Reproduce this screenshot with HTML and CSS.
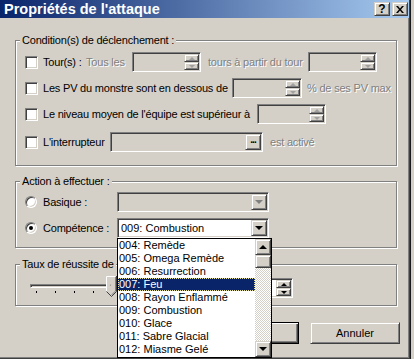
FILE: index.html
```html
<!DOCTYPE html>
<html lang="fr">
<head>
<meta charset="utf-8">
<title>Propriétés de l'attaque</title>
<link rel="stylesheet" href="styles.css">
</head>
<body>
<div class="window">
  <div class="titlebar">
    <span class="title">Propriétés de l'attaque</span>
    <span class="tbtn raised help">?</span>
    <span class="tbtn raised close"><svg width="8" height="7" viewBox="0 0 8 7"><path d="M0 0h2l2 2.4L6 0h2L5 3.5 8 7H6L4 4.6 2 7H0l3-3.5z" fill="#000"/></svg></span>
  </div>

  <div class="content">
    <div class="group g1">
      <div class="group-title">Condition(s) de déclenchement :</div>
      <div class="rows">
        <div class="row">
          <span class="check sunken"></span>
          <span class="lbl w-tour">Tour(s) :</span>
          <span class="lbl dim w-tous">Tous les</span>
          <span class="field sunken disabled w69">
            <span class="spin"><span class="sb raised"><i class="aup"></i></span><span class="sb raised"><i class="adown"></i></span></span>
          </span>
          <span class="lbl dim after w-partir">tours à partir du tour</span>
          <span class="field sunken disabled w69">
            <span class="spin"><span class="sb raised"><i class="aup"></i></span><span class="sb raised"><i class="adown"></i></span></span>
          </span>
        </div>
        <div class="row">
          <span class="check sunken"></span>
          <span class="lbl w-pv">Les PV du monstre sont en dessous de</span>
          <span class="field sunken disabled w70">
            <span class="spin"><span class="sb raised"><i class="aup"></i></span><span class="sb raised"><i class="adown"></i></span></span>
          </span>
          <span class="lbl dim after-pv">% de ses PV max</span>
        </div>
        <div class="row">
          <span class="check sunken"></span>
          <span class="lbl w-niv">Le niveau moyen de l'équipe est supérieur à</span>
          <span class="field sunken disabled w69">
            <span class="spin"><span class="sb raised"><i class="aup"></i></span><span class="sb raised"><i class="adown"></i></span></span>
          </span>
        </div>
        <div class="row r4">
          <span class="check sunken"></span>
          <span class="lbl w-int">L'interrupteur</span>
          <span class="field sunken disabled w153">
            <span class="dots raised">...</span>
          </span>
          <span class="lbl dim after">est activé</span>
        </div>
      </div>
    </div>

    <div class="group g2">
      <div class="group-title">Action à effectuer :</div>
      <div class="rows r-action">
        <div class="row">
          <span class="radio"></span>
          <span class="lbl w-radio">Basique :</span>
          <span class="combo sunken disabled">
            <span class="ctext"></span>
            <span class="cbtn raised"><i class="carrow dimarrow"></i></span>
          </span>
        </div>
        <div class="row">
          <span class="radio checked"></span>
          <span class="lbl w-radio">Compétence :</span>
          <span class="combo sunken">
            <span class="ctext">009: Combustion</span>
            <span class="cbtn raised"><i class="carrow"></i></span>
          </span>
        </div>
      </div>
    </div>

    <div class="group g3">
      <div class="group-title">Taux de réussite de</div>
      <div class="row slider-row">
        <div class="slider">
          <div class="track"></div>
          <div class="ticks"><i></i><i></i><i></i><i></i><i></i><i></i><i></i><i></i><i></i><i></i></div>
          <svg class="thumb" width="11" height="21" viewBox="0 0 11 21">
            <path d="M0.5 15.5V0.5H9.5" fill="#d4d0c8" stroke="#fff"/>
            <path d="M1.5 15V1.5H9" fill="none" stroke="#d4d0c8"/>
            <path d="M10.5 0V15.5L5.5 20.5L0.5 15.5" fill="#d4d0c8" stroke="#404040"/>
            <path d="M9.5 1V15L5.5 19" fill="none" stroke="#808080"/>
          </svg>
        </div>
        <span class="field sunken w63">
          <span class="spin"><span class="sb raised"><i class="aup blk"></i></span><span class="sb raised"><i class="adown blk"></i></span></span>
        </span>
      </div>
    </div>

    <div class="buttons">
      <span class="btn default">OK</span>
      <span class="btn raised">Annuler</span>
    </div>
  </div>

  <div class="droplist">
    <div class="items">
      <div class="item">004: Remède</div>
      <div class="item">005: Omega Remède</div>
      <div class="item">006: Resurrection</div>
      <div class="item sel">007: Feu</div>
      <div class="item">008: Rayon Enflammé</div>
      <div class="item">009: Combustion</div>
      <div class="item">010: Glace</div>
      <div class="item">011: Sabre Glacial</div>
      <div class="item">012: Miasme Gelé</div>
    </div>
    <div class="vscroll">
      <span class="sbtn raised"><i class="carrow up"></i></span>
      <span class="sthumb raised"></span>
      <span class="strack"></span>
      <span class="sbtn raised"><i class="carrow"></i></span>
    </div>
  </div>
</div>
<div class="edge"></div>
</body>
</html>
```

FILE: styles.css
```css
* { box-sizing: border-box; }
html, body { margin: 0; padding: 0; }
body {
  width: 414px;
  height: 359px;
  overflow: hidden;
  display: flex;
  background: #d4d0c8;
  font-family: "Liberation Sans", Arial, sans-serif;
  font-size: 11px;
  color: #000;
}
i { display: block; font-style: normal; }

.window {
  position: relative;
  width: 410px;
  height: 359px;
  flex: none;
  display: flex;
  flex-direction: column;
  background: #d4d0c8;
  border-right: 1px solid #404040;
  border-bottom: 1px solid #404040;
  box-shadow: inset -1px -1px 0 #808080;
}
.edge {
  flex: 1;
  background: #d4d0c8;
  border-left: 1px solid #1a1a1a;
}

/* bevels */
.sunken {
  border: 1px solid;
  border-color: #808080 #fff #fff #808080;
  box-shadow: inset 1px 1px 0 #404040, inset -1px -1px 0 #d4d0c8;
}
.raised {
  background: #d4d0c8;
  border: 1px solid;
  border-color: #d4d0c8 #404040 #404040 #d4d0c8;
  box-shadow: inset 1px 1px 0 #fff, inset -1px -1px 0 #808080;
}

/* title bar */
.titlebar {
  height: 18px;
  flex: none;
  display: flex;
  align-items: center;
  padding: 0 1px 0 4px;
  background: linear-gradient(to right, #0a246a, #a6caf0);
  color: #fff;
  font-weight: bold;
  font-size: 14.5px;
}
.titlebar .title { flex: 1; white-space: nowrap; }
.tbtn {
  width: 16px;
  height: 14px;
  display: flex;
  align-items: center;
  justify-content: center;
  color: #000;
  font-size: 12px;
  line-height: 12px;
}
.tbtn + .tbtn { margin-left: 2px; }

/* content */
.content {
  flex: 1;
  display: flex;
  flex-direction: column;
  padding-left: 15px;
}
.group {
  width: 382px;
  flex: none;
  border: 1px solid #808080;
  box-shadow: inset 1px 1px 0 #fff, 1px 1px 0 #fff;
  padding-left: 9px;
  letter-spacing: -0.2px;
}
.group-title {
  width: max-content;
  height: 14px;
  line-height: 14px;
  margin: -8px 0 0 -5px;
  padding: 0 2px;
  background: #d4d0c8;
  white-space: nowrap;
}
.g1 { margin-top: 22px; height: 126px; }
.g2 { margin-top: 15px; height: 67px; }
.g3 { margin-top: 16px; height: 42px; }

.rows { display: flex; flex-direction: column; gap: 6px; margin-top: 5px; }
.rows .r4 { margin-top: 2px; }
.r-action { margin-top: 4px; }
.row {
  height: 20px;
  display: flex;
  align-items: center;
  white-space: nowrap;
}
.lbl { flex: none; }
.dim { color: #808080; text-shadow: 1px 1px 0 #fff; }
.w-tour { width: 43px; }
.w-tous { width: 46px; }
.w-partir { width: 100px; }
.w-pv { width: 189px; }
.w-niv { width: 214px; }
.w-int { width: 67px; }
.w-radio { width: 74px; }
.after { margin-left: 7px; }
.after-pv { margin-left: 5px; }

.check {
  width: 13px;
  height: 13px;
  flex: none;
  background: #fff;
  margin-right: 5px;
}
.radio {
  position: relative;
  width: 12px;
  height: 12px;
  flex: none;
  margin-right: 6px;
  border-radius: 50%;
  background: #fff;
  border: 1px solid;
  border-color: #808080 #fff #fff #808080;
  box-shadow: inset 1px 1px 0 #404040, inset -1px -1px 0 #d4d0c8;
}
.radio.checked::after {
  content: "";
  position: absolute;
  left: 3px;
  top: 3px;
  width: 4px;
  height: 4px;
  border-radius: 50%;
  background: #000;
}

/* edit fields + spin */
.field {
  flex: none;
  height: 20px;
  padding: 1px;
  display: flex;
  justify-content: flex-end;
  align-items: stretch;
  background: #fff;
}
.field.disabled { background: #d4d0c8; }
.w69 { width: 69px; }
.w70 { width: 70px; }
.w63 { width: 63px; }
.w153 { width: 153px; }
.spin { width: 15px; display: flex; flex-direction: column; }
.sb {
  height: 8px;
  display: flex;
  align-items: center;
  justify-content: center;
}
.aup, .adown {
  width: 0;
  height: 0;
  border-left: 3px solid transparent;
  border-right: 3px solid transparent;
}
.aup { border-bottom: 3px solid #a0a0a0; }
.adown { border-top: 3px solid #a0a0a0; }
.aup.blk { border-bottom-color: #000; }
.adown.blk { border-top-color: #000; }
.dots {
  width: 16px;
  display: flex;
  align-items: flex-start;
  justify-content: center;
  font-size: 10px;
  line-height: 10px;
  font-weight: bold;
  letter-spacing: -1px;
}

/* combos */
.combo {
  width: 152px;
  height: 20px;
  flex: none;
  display: flex;
  padding: 1px;
  background: #fff;
  letter-spacing: 0;
}
.combo.disabled { background: #d4d0c8; }
.ctext { flex: 1; padding-left: 2px; line-height: 16px; }
.cbtn {
  width: 16px;
  height: 16px;
  display: flex;
  align-items: center;
  justify-content: center;
}
.carrow {
  width: 0;
  height: 0;
  border-left: 4px solid transparent;
  border-right: 4px solid transparent;
  border-top: 4px solid #000;
}
.carrow.up { border-top: 0; border-bottom: 4px solid #000; }
.carrow.dimarrow { border-top-color: #808080; }

/* slider */
.slider-row { margin-top: 7px; }
.slider {
  position: relative;
  width: 200px;
  height: 20px;
  flex: none;
  margin-right: 5px;
}
.track {
  height: 4px;
  margin: 6px 0 0 5px;
  border: 1px solid;
  border-color: #808080 #fff #fff #808080;
  box-shadow: inset 1px 1px 0 #404040;
}
.ticks {
  display: flex;
  gap: 18px;
  margin: 3px 0 0 11px;
}
.ticks i { width: 1px; height: 2px; background: #000; }
.thumb { position: absolute; left: 81px; top: -2px; }

/* buttons */
.buttons {
  display: flex;
  justify-content: flex-end;
  gap: 11px;
  margin-top: 16px;
  padding-right: 9px;
}
.btn {
  width: 90px;
  height: 22px;
  display: flex;
  align-items: center;
  justify-content: center;
}
.btn.default {
  border: 1px solid #000;
  background: #d4d0c8;
  box-shadow: inset 1px 1px 0 #fff, inset -1px -1px 0 #404040, inset -2px -2px 0 #808080;
}

/* dropdown list (overlay) */
.droplist {
  position: absolute;
  left: 117px;
  top: 238px;
  width: 155px;
  height: 120px;
  border: 1px solid #000;
  background: #fff;
  display: flex;
}
.items { flex: 1; display: flex; flex-direction: column; }
.item {
  height: 13px;
  line-height: 13px;
  padding-left: 1px;
  white-space: nowrap;
  overflow: hidden;
}
.item.sel {
  background: #0a246a;
  color: #fff;
  outline: 1px dotted #e8e4a0;
  outline-offset: -1px;
}
.vscroll {
  width: 16px;
  display: flex;
  flex-direction: column;
}
.sbtn {
  height: 16px;
  flex: none;
  display: flex;
  align-items: center;
  justify-content: center;
}
.sthumb { height: 13px; flex: none; }
.strack {
  flex: 1;
  background: repeating-conic-gradient(#d4d0c8 0 25%, #fff 0 50%) 0 0 / 2px 2px;
}
```
